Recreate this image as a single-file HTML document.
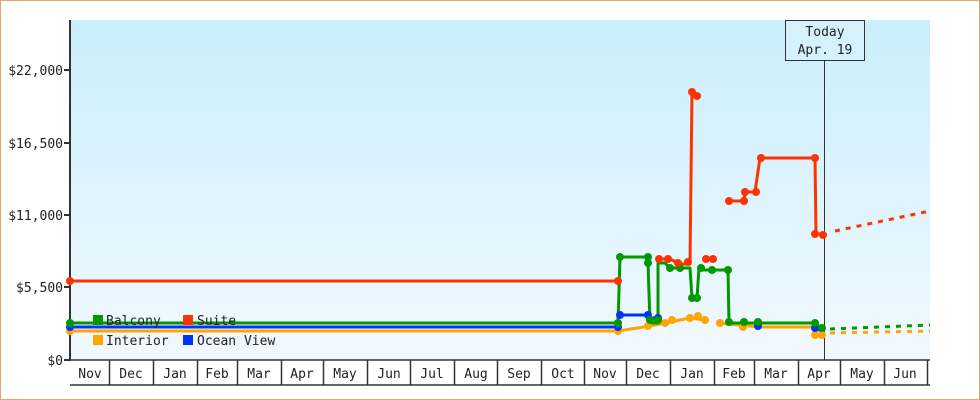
<!DOCTYPE html>
<html><head><meta charset="utf-8"><style>
html,body{margin:0;padding:0;background:#fff}
svg{display:block}
text{font-family:"DejaVu Sans Mono","Liberation Mono",monospace;font-size:13px;fill:#222}
</style></head><body>
<svg width="980" height="400" viewBox="0 0 980 400" xmlns="http://www.w3.org/2000/svg">
<defs><linearGradient id="g" x1="0" y1="0" x2="0" y2="1"><stop offset="0" stop-color="#c9eefc"/><stop offset="1" stop-color="#f2f9ff"/></linearGradient></defs>
<rect x="0.5" y="0.5" width="979" height="399" fill="#fff" stroke="#e3a868"/>
<rect x="70" y="20" width="860" height="340" fill="url(#g)"/>
<g stroke="#333" stroke-width="2">
<line x1="70" y1="20" x2="70" y2="361"/>
<line x1="64" y1="360" x2="70" y2="360"/><line x1="64" y1="287" x2="70" y2="287"/><line x1="64" y1="215" x2="70" y2="215"/><line x1="64" y1="143" x2="70" y2="143"/><line x1="64" y1="70" x2="70" y2="70"/>
</g>
<g text-anchor="end"><text x="63" y="365">$0</text><text x="63" y="292">$5,500</text><text x="63" y="220">$11,000</text><text x="63" y="148">$16,500</text><text x="63" y="75">$22,000</text></g>
<g stroke="#333" stroke-width="1.5" fill="none">
<line x1="70" y1="360" x2="930" y2="360"/><line x1="70" y1="385" x2="930" y2="385"/>
<path d="M109.5 360V385M153.5 360V385M197.5 360V385M237.5 360V385M281.5 360V385M323.5 360V385M367.5 360V385M410.5 360V385M454.5 360V385M497.5 360V385M541.5 360V385M584.5 360V385M626.5 360V385M670.5 360V385M714.5 360V385M754.5 360V385M798.5 360V385M840.5 360V385M884.5 360V385M927.5 360V385"/>
</g>
<g text-anchor="middle"><text x="90" y="378">Nov</text><text x="131" y="378">Dec</text><text x="175" y="378">Jan</text><text x="217" y="378">Feb</text><text x="259" y="378">Mar</text><text x="302" y="378">Apr</text><text x="345" y="378">May</text><text x="389" y="378">Jun</text><text x="432" y="378">Jul</text><text x="476" y="378">Aug</text><text x="519" y="378">Sep</text><text x="563" y="378">Oct</text><text x="605" y="378">Nov</text><text x="648" y="378">Dec</text><text x="692" y="378">Jan</text><text x="734" y="378">Feb</text><text x="776" y="378">Mar</text><text x="819" y="378">Apr</text><text x="862" y="378">May</text><text x="905" y="378">Jun</text></g>
<line x1="824.5" y1="60" x2="824.5" y2="360" stroke="#333"/>
<rect x="785.5" y="20.5" width="79" height="40" fill="#d4f1fc" stroke="#333"/>
<text x="825" y="36" text-anchor="middle">Today</text><text x="825" y="54" text-anchor="middle">Apr. 19</text>
<g fill="none" stroke-width="3" stroke-linejoin="round">
<path stroke="#ffa500" d="M70 331H618L650 326L665 323L690 318L705 320M718 323L760 327H815V335H824"/>
<path stroke="#0033ff" d="M70 327H618V315H648L650 318H658M760 325M815 329L824 331"/>
<path stroke="#009900" d="M70 323H618L620 257H648V263L650 323H658V263H665L670 268H690L692 298H697L699 268L703 270H728L729 323H815L824 330"/>
<path stroke="#ff3300" d="M70 281H618M656 259H670L680 264H690L692 92L697 96M708 259H715M729 201H744L745 192H755L760 158H815L816 234H824"/>
<path stroke="#ff3300" stroke-dasharray="5,6" d="M835 231L930 211"/>
<path stroke="#009900" stroke-dasharray="5,6" d="M830 329L930 325"/>
<path stroke="#ffa500" stroke-dasharray="5,6" d="M830 333L930 331"/>
</g>
<g>
<g fill="#ffa500"><circle cx="70" cy="331" r="4"/><circle cx="618" cy="331" r="4"/><circle cx="648" cy="326" r="4"/><circle cx="665" cy="323" r="4"/><circle cx="672" cy="320" r="4"/><circle cx="690" cy="318" r="4"/><circle cx="698" cy="316" r="4"/><circle cx="705" cy="320" r="4"/><circle cx="720" cy="323" r="4"/><circle cx="743" cy="327" r="4"/><circle cx="815" cy="335" r="4"/><circle cx="822" cy="335" r="4"/></g>
<g fill="#0033ff"><circle cx="70" cy="327" r="4"/><circle cx="618" cy="327" r="4"/><circle cx="620" cy="315" r="4"/><circle cx="648" cy="315" r="4"/><circle cx="658" cy="318" r="4"/><circle cx="758" cy="326" r="4"/><circle cx="815" cy="328" r="4"/></g>
<g fill="#009900"><circle cx="70" cy="323" r="4"/><circle cx="618" cy="323" r="4"/><circle cx="620" cy="257" r="4"/><circle cx="648" cy="257" r="4"/><circle cx="648" cy="263" r="4"/><circle cx="650" cy="320" r="4"/><circle cx="658" cy="320" r="4"/><circle cx="670" cy="268" r="4"/><circle cx="680" cy="268" r="4"/><circle cx="692" cy="298" r="4"/><circle cx="697" cy="298" r="4"/><circle cx="701" cy="268" r="4"/><circle cx="712" cy="270" r="4"/><circle cx="728" cy="270" r="4"/><circle cx="729" cy="322" r="4"/><circle cx="744" cy="322" r="4"/><circle cx="758" cy="322" r="4"/><circle cx="815" cy="323" r="4"/><circle cx="822" cy="328" r="4"/></g>
<g fill="#ff3300"><circle cx="70" cy="281" r="4"/><circle cx="618" cy="281" r="4"/><circle cx="659" cy="259" r="4"/><circle cx="668" cy="259" r="4"/><circle cx="678" cy="263" r="4"/><circle cx="688" cy="262" r="4"/><circle cx="692" cy="92" r="4"/><circle cx="697" cy="96" r="4"/><circle cx="706" cy="259" r="4"/><circle cx="713" cy="259" r="4"/><circle cx="729" cy="201" r="4"/><circle cx="744" cy="201" r="4"/><circle cx="745" cy="192" r="4"/><circle cx="756" cy="192" r="4"/><circle cx="761" cy="158" r="4"/><circle cx="815" cy="158" r="4"/><circle cx="815" cy="234" r="4"/><circle cx="823" cy="235" r="4"/></g>
</g>
<rect x="93" y="315" width="10" height="10" fill="#009900"/><text x="106" y="325">Balcony</text>
<rect x="183" y="315" width="10" height="10" fill="#ff3300"/><text x="197" y="325">Suite</text>
<rect x="93" y="335" width="10" height="10" fill="#ffa500"/><text x="106" y="345">Interior</text>
<rect x="183" y="335" width="10" height="10" fill="#0033ff"/><text x="197" y="345">Ocean View</text>
</svg>
</body></html>
